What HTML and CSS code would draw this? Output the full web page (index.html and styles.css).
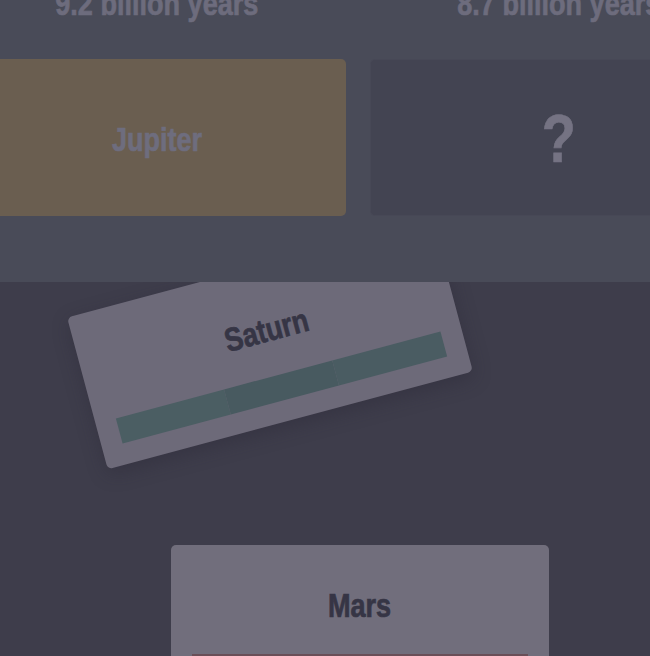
FILE: index.html
```html
<!DOCTYPE html>
<html>
<head>
<meta charset="utf-8">
<link rel="stylesheet" href="styles.css">
</head>
<body>
<div class="top">
  <div class="row">
    <div class="col years"><span class="narrow">9.2 billion years</span></div>
    <div class="col years"><span class="narrow">8.7 billion years</span></div>
  </div>
  <div class="row cards">
    <div class="col card card-jupiter"><span class="narrow">Jupiter</span></div>
    <div class="col card card-unknown"><span class="narrow">?</span></div>
  </div>
</div>
<div class="board">
  <div class="play-card dragged">
    <div class="play-title"><span class="narrow">Saturn</span></div>
    <div class="bar bar-teal"><span class="seg s1"></span><span class="seg s2"></span><span class="seg s3"></span></div>
  </div>
  <div class="play-card mars">
    <div class="play-title"><span class="narrow">Mars</span></div>
    <div class="bar bar-red"></div>
  </div>
</div>
</body>
</html>
```

FILE: styles.css
```css
html, body {
  margin: 0;
  padding: 0;
}
body {
  width: 650px;
  height: 656px;
  overflow: hidden;
  background: #3e3d4b;
  font-family: "Liberation Sans", Arial, sans-serif;
  font-weight: 700;
}
.narrow {
  display: inline-block;
  white-space: nowrap;
  transform: scaleX(0.82);
  transform-origin: center;
  -webkit-text-stroke: 0.7px currentColor;
}
.top {
  position: relative;
  z-index: 2;
  height: 282px;
  overflow: hidden;
  background: #494b58;
}
.row {
  display: flex;
  gap: 24px;
  margin-left: -32px;
  width: 780px;
}
.col {
  flex: none;
  width: 378px;
}
.years {
  margin-top: -14px;
  line-height: 36px;
  font-size: 33px;
  text-align: center;
  color: #6d6c7d;
  display: flex;
  justify-content: center;
}
.cards {
  margin-top: 37px;
}
.card {
  height: 157px;
  border-radius: 5px;
  display: flex;
  align-items: center;
  justify-content: center;
  box-sizing: border-box;
}
.card-jupiter {
  background: #6a5e50;
  color: #6e6d7e;
  font-size: 33px;
  padding-top: 4px;
}
.card-unknown {
  background: #434452;
  color: #757383;
  font-size: 68px;
  border: 1px solid #474856;
}
.board {
  position: relative;
  z-index: 1;
  height: 374px;
  padding: 263px 0 0 171px;
  box-sizing: border-box;
}
.play-card {
  width: 378px;
  height: 157px;
  box-sizing: border-box;
  border-radius: 5px;
  padding: 44px 21px 0;
  display: flex;
  flex-direction: column;
}
.play-title {
  height: 36px;
  line-height: 36px;
  font-size: 33px;
  color: #363545;
  margin-bottom: 30px;
  display: flex;
  justify-content: center;
}
.bar {
  height: 26px;
  display: flex;
}
.bar-teal .seg {
  flex: 1;
}
.s1 { background: #4b5e63; }
.s2 { background: #485a60; }
.s3 { background: #4a5c62; }
.bar-red {
  background: #6a4f58;
}
.mars {
  background: #716e7c;
}
.mars .play-title {
  margin-top: -1px;
  margin-bottom: 30px;
}
.dragged {
  position: absolute;
  left: 81px;
  top: -16px;
  background: #6d6a79;
  transform: rotate(-15deg);
  box-shadow: 0 6px 18px rgba(40, 38, 52, 0.35);
}
.dragged .play-title {
  margin-top: 2px;
  margin-bottom: 28px;
}
```
